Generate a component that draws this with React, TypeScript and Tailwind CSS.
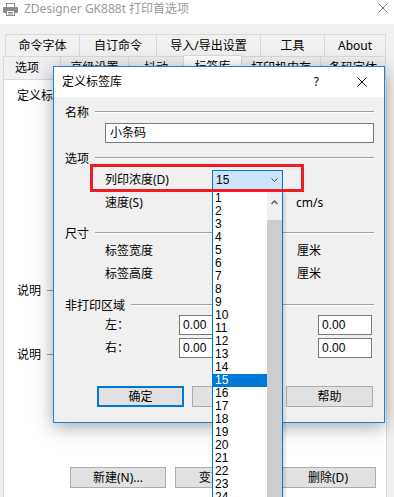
import React from "react";

const ui = "font-['Noto_Sans','Noto_Sans_CJK_SC',sans-serif]";
const num = "font-['Liberation_Sans','Arial',sans-serif]";

const levels = Array.from({ length: 30 }, (_, i) => i + 1);

const topTabs = [
  { label: "命令字体", w: "w-[74px]" },
  { label: "自订命令", w: "w-[77px]" },
  { label: "导入/导出设置", w: "w-[104px]" },
  { label: "工具", w: "w-[64px]" },
  { label: "About", w: "w-[62px]" },
];

function GroupTitle({ label, className }: { label: string; className: string }) {
  return (
    <div className={className}>
      <span className="leading-[14px]">{label}</span>
      <div className="mt-[5px] h-px flex-1 bg-[#a0a0a0] shadow-[0_1px_0_#ffffff]" />
    </div>
  );
}

function Field({ className }: { className: string }) {
  return <div className={className} />;
}

export default function App() {
  return (
    <div className={`relative h-[497px] w-[394px] overflow-hidden bg-[#f0f0f0] text-[12px] text-black ${ui}`}>
      {/* window title */}
      <div className="flex h-[24px] items-start bg-white">
        <svg className="ml-[3px] mt-[3px]" width="15" height="13" viewBox="0 0 15 13">
          <rect x="3.5" y="0.5" width="8" height="4" fill="#fff" stroke="#8a8a8a" />
          <rect x="0" y="4" width="15" height="6" rx="1" fill="#8a8a8a" />
          <rect x="3.5" y="7.5" width="8" height="5" fill="#fff" stroke="#8a8a8a" />
          <path d="M5 9.5h5M5 11h5" stroke="#8a8a8a" />
        </svg>
        <span className="ml-[6px] pt-[1px] leading-[16px] text-[#9a9a9a]">ZDesigner GK888t 打印首选项</span>
        <svg className="ml-auto mr-[6px] mt-[3px]" width="10" height="10" viewBox="0 0 10 10">
          <path d="M0.5 0.5l9 9M9.5 0.5l-9 9" stroke="#7a7a7a" />
        </svg>
      </div>

      {/* tabs */}
      <div className="pt-[10px]">
        <div className="ml-[5px] flex h-[22px]">
          {topTabs.map((t, i) => (
            <div
              key={t.label}
              className={`${t.w} flex items-center justify-center border-l border-t border-[#d9d9d9] ${i === topTabs.length - 1 ? "border-r" : ""}`}
            >
              {t.label}
            </div>
          ))}
        </div>
        <div className="ml-[3px] flex h-[23px] items-start">
          <div className="flex h-[23px] w-[57px] items-center justify-center border-l border-t border-[#d9d9d9] pr-[10px]">选项</div>
          <div className="flex h-[23px] w-[68px] items-center justify-center border-l border-t border-[#d9d9d9]">高级设置</div>
          <div className="flex h-[23px] w-[55px] items-center justify-center border-l border-t border-[#d9d9d9]">抖动</div>
          <div className="relative z-10 -mt-[1px] flex h-[25px] w-[59px] items-center justify-center border-x border-t border-[#d9d9d9] bg-white pb-[2px]">标签库</div>
          <div className="flex h-[23px] w-[78px] items-center justify-center border-t border-[#d9d9d9]">打印机内存</div>
          <div className="flex h-[23px] w-[66px] items-center justify-center border-x border-t border-[#d9d9d9]">条码字体</div>
        </div>
      </div>

      {/* tab page */}
      <div className="relative z-0 ml-[3px] h-[430px] w-[384px] border border-[#d9d9d9] bg-white pl-[13px] pt-[8px]">
        <div className="h-[16px] leading-[16px]">定义标签库</div>
        <div className="mt-[179px] flex h-[16px] items-start gap-[6px]">
          <span className="leading-[16px]">说明</span>
          <div className="mt-[7px] h-px w-[40px] bg-[#a0a0a0]" />
        </div>
        <div className="mt-[48px] flex h-[16px] items-start gap-[6px]">
          <span className="leading-[16px]">说明</span>
          <div className="mt-[7px] h-px w-[40px] bg-[#a0a0a0]" />
        </div>
        <div className="ml-[53px] mt-[104px] flex gap-[9px]">
          <button className="h-[21px] w-[96px] border border-[#adadad] bg-[#e1e1e1] leading-[19px]">新建(N)...</button>
          <button className="h-[21px] w-[96px] border border-[#adadad] bg-[#e1e1e1] leading-[19px]">变更(C)...</button>
          <button className="h-[21px] w-[96px] border border-[#adadad] bg-[#e1e1e1] leading-[19px]">删除(D)</button>
        </div>
      </div>

      {/* dialog */}
      <div className="absolute left-[53px] top-[66px] z-20 h-[357px] w-[332px] border border-[#1883d7] bg-[#f0f0f0] shadow-[0_4px_18px_rgba(0,0,0,0.35)]">
        <div className="flex h-[30px] items-center bg-white pl-[8px]">
          <span className="leading-[16px]">定义标签库</span>
          <span className="ml-auto leading-[16px]">?</span>
          <svg className="ml-[38px] mr-[17px]" width="10" height="10" viewBox="0 0 10 10">
            <path d="M0.5 0.5l9 9M9.5 0.5l-9 9" stroke="#111" />
          </svg>
        </div>

        <div className="pl-[11px] pr-[10px] pt-[9px]">
          <GroupTitle label="名称" className="flex h-[14px] items-start gap-[6px]" />
          <div className="ml-[40px] mt-[3px] flex h-[20px] items-center border border-[#7a7a7a] bg-white pl-[4px]">小条码</div>

          <GroupTitle label="选项" className="mt-[9px] flex h-[14px] items-start gap-[6px]" />
          <div className="ml-[40px] mt-[4px] flex h-[20px] items-center">
            <span className="w-[107px]">列印浓度(D)</span>
            <div className="relative flex h-[20px] w-[71px] items-center border border-[#0078d7] bg-[#cce4f7] pl-[3px]">
              <span className={num}>15</span>
              <svg className="ml-auto mr-[4px]" width="7" height="4" viewBox="0 0 7 4">
                <path d="M0.5 0.5l3 3 3-3" fill="none" stroke="#444" />
              </svg>
              {/* open list */}
              <div className="absolute left-[-1px] top-[19px] z-10 flex h-[330px] w-[71px] border-x border-[#0078d7] bg-white shadow-[2px_2px_3px_rgba(0,0,0,0.15)]">
                <div className={`w-[54px] overflow-hidden pt-[2px] ${num}`}>
                  {levels.map((n) => (
                    <div
                      key={n}
                      className={`h-[13px] pl-[2px] leading-[13px] ${n === 15 ? "bg-[#0078d7] text-white" : ""}`}
                    >
                      {n}
                    </div>
                  ))}
                </div>
                <div className="flex w-[15px] flex-col">
                  <div className="flex h-[30px] justify-center bg-[#f0f0f0] pt-[10px]">
                    <svg width="7" height="5" viewBox="0 0 7 5">
                      <path d="M0.5 4l3-3 3 3" fill="none" stroke="#606060" strokeWidth="1.5" />
                    </svg>
                  </div>
                  <div className="flex-1 bg-[#cdcdcd]" />
                </div>
              </div>
            </div>
          </div>
          <div className="ml-[40px] mt-[3px] flex h-[20px] items-center">
            <span className="w-[107px]">速度(S)</span>
            <Field className="h-[20px] w-[71px] border border-[#7a7a7a] bg-white" />
            <span className="ml-[13px]">cm/s</span>
          </div>

          <GroupTitle label="尺寸" className="mt-[14px] flex h-[14px] items-start gap-[6px]" />
          <div className="ml-[40px] flex h-[20px] items-center">
            <span className="w-[107px]">标签宽度</span>
            <Field className="h-[20px] w-[71px] border border-[#7a7a7a] bg-white" />
            <span className="ml-[14px]">厘米</span>
          </div>
          <div className="ml-[40px] mt-[3px] flex h-[20px] items-center">
            <span className="w-[107px]">标签高度</span>
            <Field className="h-[20px] w-[71px] border border-[#7a7a7a] bg-white" />
            <span className="ml-[14px]">厘米</span>
          </div>

          <GroupTitle label="非打印区域" className="mt-[15px] flex h-[14px] items-start gap-[6px]" />
          <div className="ml-[40px] mt-[2px] flex h-[20px] items-center">
            <span className="w-[74px]">左：</span>
            <div className={`flex h-[20px] w-[54px] items-center border border-[#7a7a7a] bg-white pl-[3px] ${num}`}>0.00</div>
            <span className="w-[85px] pl-[15px]">上：</span>
            <div className={`flex h-[20px] w-[54px] items-center border border-[#7a7a7a] bg-white pl-[3px] ${num}`}>0.00</div>
          </div>
          <div className="ml-[40px] mt-[3px] flex h-[20px] items-center">
            <span className="w-[74px]">右：</span>
            <div className={`flex h-[20px] w-[54px] items-center border border-[#7a7a7a] bg-white pl-[3px] ${num}`}>0.00</div>
            <span className="w-[85px] pl-[15px]">下：</span>
            <div className={`flex h-[20px] w-[54px] items-center border border-[#7a7a7a] bg-white pl-[3px] ${num}`}>0.00</div>
          </div>

          <div className="ml-[32px] mt-[28px] flex">
            <button className="h-[21px] w-[87px] border-2 border-[#0078d7] bg-[#e1e1e1] leading-[17px]">确定</button>
            <button className="ml-[8px] h-[21px] w-[87px] border border-[#adadad] bg-[#e1e1e1] leading-[19px]">取消</button>
            <button className="ml-[7px] h-[21px] w-[87px] border border-[#adadad] bg-[#e1e1e1] leading-[19px]">帮助</button>
          </div>
        </div>

        {/* red annotation */}
        <div className="pointer-events-none absolute left-[36px] top-[97px] z-30 h-[28px] w-[214px] border-[3px] border-[#ec1c24]" />
      </div>
    </div>
  );
}
